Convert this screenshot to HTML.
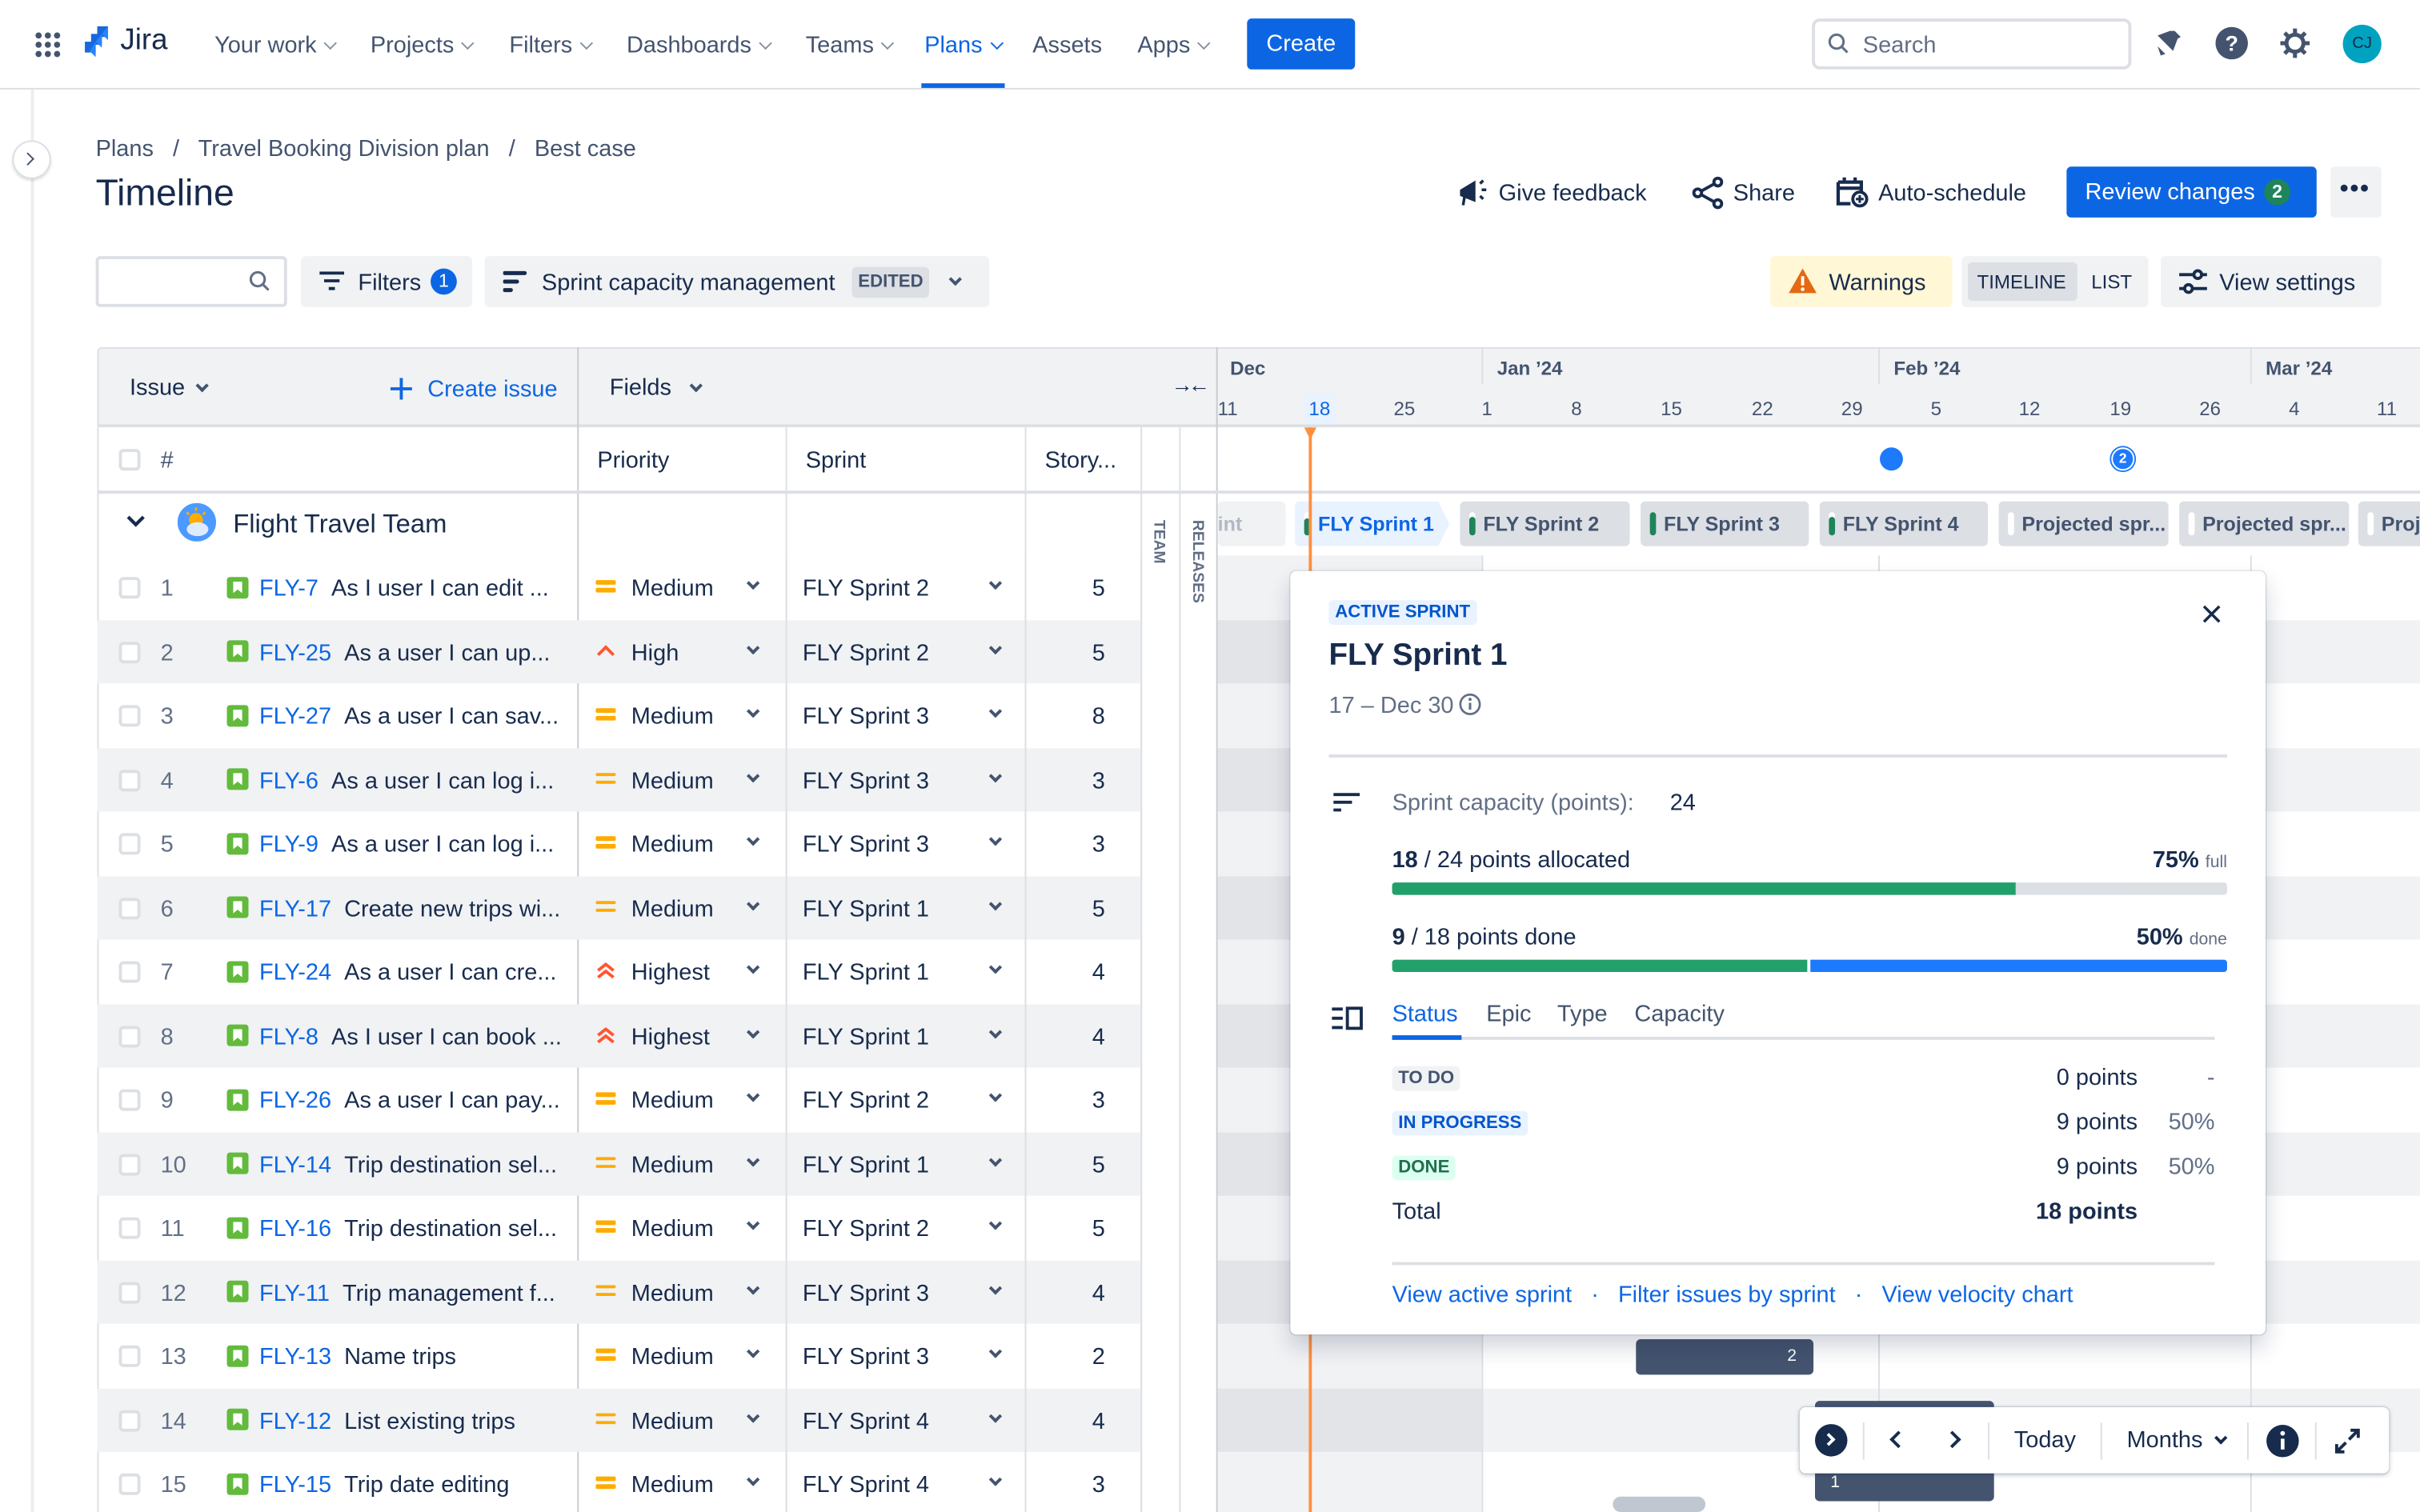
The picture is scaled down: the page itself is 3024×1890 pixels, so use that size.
<!DOCTYPE html>
<html><head><meta charset="utf-8"><style>
*{box-sizing:border-box;margin:0;padding:0}
html,body{width:3024px;height:1890px;overflow:hidden;background:#fff}
#w{position:absolute;left:0;top:0;width:1568px;height:980px;transform:scale(1.928572);transform-origin:0 0;font-family:"Liberation Sans",sans-serif;color:#172b4d;font-size:15px;overflow:hidden}
.a{position:absolute;white-space:nowrap}
.nav{top:21px;font-size:15px;color:#44546f}
.cv{display:inline-block;width:6px;height:6px;border-right:1.5px solid #8590a2;border-bottom:1.5px solid #8590a2;transform:rotate(45deg);margin-left:6px;position:relative;top:-3px}
.cd{display:inline-block;width:6px;height:6px;border-right:2px solid #44546f;border-bottom:2px solid #44546f;transform:rotate(45deg);position:relative;top:-3px}
.r{position:absolute;left:63px;width:676px;height:41.5px}
.r>*{position:absolute;top:13px}
.cb{left:14px!important;top:14px!important;width:14px;height:14px;border:2px solid #dcdfe4;border-radius:3px;background:#fff}
.n{left:41px;color:#626f86}
.ic{left:84px;top:13.5px!important;width:14px;height:14px;background:#63ba3c;border-radius:2px}
.ic:after{content:"";position:absolute;left:4px;top:3px;width:6px;height:8px;background:#fff;clip-path:polygon(0 0,100% 0,100% 100%,50% 70%,0 100%)}
.k{left:105px;color:#0c66e4}
.pi{left:323px;top:15px!important;width:13px;height:10px}
.pt{left:346px}
.c1{left:422px;top:15px!important}
.st{left:457px}
.c2{left:579px;top:15px!important}
.sp{right:23px}
.med:before,.med:after{content:"";position:absolute;left:0;width:13px;height:2.5px;background:#ffab00;border-radius:1px}
.med:before{top:1px}.med:after{top:6px}
.vl{position:absolute;width:1px;background:#dcdfe4}
.chip{position:absolute;top:325px;height:29px;background:#dcdfe4;border-radius:3px;font-weight:bold;font-size:13px;color:#44546f;padding:7px 0 0 15px}
.chip i{position:absolute;left:6px;top:7px;width:4px;height:15px;background:#fff;border-radius:2px}
.chip i b{position:absolute;left:0;bottom:0;width:4px;height:10px;background:#1f845a;border-radius:2px}
.btn{position:absolute;background:#f1f2f4;border-radius:3px;height:33px}
.loz{display:inline-block;font-size:11.5px;font-weight:bold;padding:2px 4px;border-radius:3px}
</style></head><body><div id="w">

<div class="a" style="left:0;top:57px;width:1568px;height:1px;background:#dcdfe4"></div>
<svg class="a" style="left:22px;top:20px" width="18" height="18"><g fill="#44546f"><circle cx="3" cy="3" r="2"/><circle cx="9" cy="3" r="2"/><circle cx="15" cy="3" r="2"/><circle cx="3" cy="9" r="2"/><circle cx="9" cy="9" r="2"/><circle cx="15" cy="9" r="2"/><circle cx="3" cy="15" r="2"/><circle cx="9" cy="15" r="2"/><circle cx="15" cy="15" r="2"/></g></svg>
<svg class="a" style="left:52px;top:17px" width="20" height="22" viewBox="0 0 20 22"><path d="M18 0h-7v7h7zM14 5H7v7h7zM10 10H3v7h7z" fill="#1868db"/><path d="M18 0v9l-4-4zM14 5v9l-4-4zM10 10v10l-4-4z" fill="#2684ff"/></svg>
<div class="a" style="left:78px;top:16px;font-size:19px;color:#172b4d">Jira</div>
<div class="a nav" style="left:139px">Your work<span class="cv"></span></div>
<div class="a nav" style="left:240px">Projects<span class="cv"></span></div>
<div class="a nav" style="left:330px">Filters<span class="cv"></span></div>
<div class="a nav" style="left:406px">Dashboards<span class="cv"></span></div>
<div class="a nav" style="left:522px">Teams<span class="cv"></span></div>
<div class="a nav" style="left:599px;color:#0c66e4">Plans<span class="cv" style="border-color:#0c66e4"></span></div>
<div class="a" style="left:597px;top:54px;width:54px;height:3px;background:#0c66e4"></div>
<div class="a nav" style="left:669px">Assets</div>
<div class="a nav" style="left:737px">Apps<span class="cv"></span></div>
<div class="a" style="left:808px;top:12px;width:70px;height:33px;background:#0c66e4;border-radius:3px;color:#fff;font-size:15px;text-align:center;line-height:33px">Create</div>
<div class="a" style="left:1174px;top:12px;width:207px;height:33px;border:2px solid #dcdfe4;border-radius:5px;color:#626f86;padding:7px 0 0 31px">Search</div>
<svg class="a" style="left:1184px;top:21px" width="14" height="14"><circle cx="6" cy="6" r="4.5" fill="none" stroke="#626f86" stroke-width="1.6"/><path d="M9.5 9.5l3.5 3.5" stroke="#626f86" stroke-width="1.6"/></svg>
<svg class="a" style="left:1395px;top:18px" width="20" height="20" viewBox="0 0 20 20"><path d="M14 2l4 4-2 1-3 8-10-10 8-3zM3 12l5 5-3 1z" fill="#44546f"/></svg>
<svg class="a" style="left:1435px;top:17px" width="22" height="22"><circle cx="11" cy="11" r="10.5" fill="#44546f"/><text x="11" y="16" text-anchor="middle" font-family="Liberation Sans" font-weight="bold" font-size="14" fill="#fff">?</text></svg>
<svg class="a" style="left:1476px;top:17px" width="22" height="22" viewBox="0 0 22 22"><g fill="none" stroke="#44546f" stroke-width="2.6"><circle cx="11" cy="11" r="5.5"/><path d="M11 1.5v3.5M11 17v3.5M1.5 11h3.5M17 11h3.5M4.3 4.3l2.4 2.4M15.3 15.3l2.4 2.4M4.3 17.7l2.4-2.4M15.3 6.7l2.4-2.4"/></g></svg>
<div class="a" style="left:1518px;top:16px;width:25px;height:25px;border-radius:50%;background:#00a3bf;color:#172b4d;font-size:10.5px;text-align:center;line-height:25px">CJ</div>

<div class="a" style="left:20px;top:58px;width:2px;height:922px;background:#eceef1"></div>
<div class="a" style="left:8px;top:91px;width:25px;height:25px;border-radius:50%;background:#fff;border:1px solid #dcdfe4;box-shadow:0 1px 2px rgba(0,0,0,.15)"></div>
<div class="a" style="left:15px;top:100px;width:6px;height:6px;border-right:1.8px solid #44546f;border-top:1.8px solid #44546f;transform:rotate(45deg)"></div>

<div class="a" style="left:62px;top:88px;color:#44546f">Plans &nbsp;&nbsp;/&nbsp;&nbsp; Travel Booking Division plan &nbsp;&nbsp;/&nbsp;&nbsp; Best case</div>
<div class="a" style="left:62px;top:112px;font-size:24px;color:#172b4d">Timeline</div>

<svg class="a" style="left:943px;top:114px" width="22" height="22" viewBox="0 0 22 22"><path d="M3 9l10-6v14L3 13z" fill="#172b4d"/><path d="M6 13l-1 6" stroke="#172b4d" stroke-width="1.8"/><path d="M16 5l2-2M17 9h3M16 13l2 2" stroke="#172b4d" stroke-width="1.8"/></svg>
<div class="a" style="left:971px;top:117px">Give feedback</div>
<svg class="a" style="left:1096px;top:114px" width="22" height="22"><g fill="none" stroke="#172b4d" stroke-width="2"><circle cx="17" cy="4" r="2.5"/><circle cx="4" cy="11" r="2.5"/><circle cx="17" cy="18" r="2.5"/><path d="M6 10l9-5M6 12l9 5"/></g></svg>
<div class="a" style="left:1123px;top:117px">Share</div>
<svg class="a" style="left:1189px;top:113px" width="22" height="22" viewBox="0 0 22 22"><path d="M2 5h15v6M2 5v14h8M2 9h15M6 2v4M13 2v4" fill="none" stroke="#172b4d" stroke-width="2.2"/><circle cx="16" cy="16" r="4.5" fill="none" stroke="#172b4d" stroke-width="2"/><path d="M16 13.5v5M13.5 16h5" stroke="#172b4d" stroke-width="1.6"/></svg>
<div class="a" style="left:1217px;top:117px">Auto-schedule</div>
<div class="a" style="left:1339px;top:108px;width:162px;height:33px;background:#0c66e4;border-radius:3px;color:#fff;padding:8px 0 0 12px">Review changes</div>
<div class="a" style="left:1467px;top:116px;width:17px;height:17px;border-radius:50%;background:#1f845a;color:#fff;font-size:12px;text-align:center;line-height:17px;font-weight:bold">2</div>
<div class="btn" style="left:1510px;top:108px;width:33px"></div>
<div class="a" style="left:1516px;top:114px;font-weight:bold;font-size:16px;letter-spacing:1px">•••</div>

<div class="a" style="left:62px;top:166px;width:124px;height:33px;border:2px solid #dcdfe4;border-radius:3px"></div>
<svg class="a" style="left:161px;top:175px" width="14" height="14"><circle cx="6" cy="6" r="4.5" fill="none" stroke="#626f86" stroke-width="1.6"/><path d="M9.5 9.5l3.5 3.5" stroke="#626f86" stroke-width="1.6"/></svg>
<div class="btn" style="left:195px;top:166px;width:111px"></div>
<svg class="a" style="left:207px;top:176px" width="16" height="14"><path d="M0 1h16M3 6h10M6 11h4" stroke="#172b4d" stroke-width="2"/></svg>
<div class="a" style="left:232px;top:175px">Filters</div>
<div class="a" style="left:279px;top:174px;width:17px;height:17px;border-radius:50%;background:#0c66e4;color:#fff;font-size:12px;text-align:center;line-height:17px">1</div>
<div class="btn" style="left:314px;top:166px;width:327px"></div>
<svg class="a" style="left:326px;top:175px" width="16" height="16"><path d="M1 2h13M1 7.5h8M1 13h4" stroke="#172b4d" stroke-width="2.6" stroke-linecap="round"/></svg>
<div class="a" style="left:351px;top:175px">Sprint capacity management</div>
<div class="a" style="left:552px;top:173px;height:20px;background:#dcdfe4;border-radius:3px;font-size:11.5px;font-weight:bold;color:#44546f;padding:4px 4px">EDITED</div>
<div class="a" style="left:616px;top:174px"><span class="cd"></span></div>

<div class="a" style="left:1147px;top:166px;width:118px;height:33px;background:#fff7d6;border-radius:3px"></div>
<svg class="a" style="left:1158px;top:173px" width="20" height="18"><path d="M10 1L19 17H1z" fill="#e56910"/><path d="M10 6v6" stroke="#fff" stroke-width="2"/><circle cx="10" cy="14.5" r="1.2" fill="#fff"/></svg>
<div class="a" style="left:1185px;top:175px">Warnings</div>
<div class="btn" style="left:1271px;top:166px;width:121px"></div>
<div class="a" style="left:1275px;top:170px;width:71px;height:25px;background:#dcdfe4;border-radius:3px"></div>
<div class="a" style="left:1281px;top:176px;font-size:12.5px">TIMELINE</div>
<div class="a" style="left:1355px;top:176px;font-size:12.5px">LIST</div>
<div class="btn" style="left:1400px;top:166px;width:143px"></div>
<svg class="a" style="left:1411px;top:174px" width="20" height="18"><g stroke="#172b4d" stroke-width="2" fill="none"><path d="M1 4h18M1 13h18"/><circle cx="13" cy="4" r="2.5" fill="#f1f2f4"/><circle cx="7" cy="13" r="2.5" fill="#f1f2f4"/></g></svg>
<div class="a" style="left:1438px;top:175px">View settings</div>

<div class="a" style="left:63px;top:225px;width:1505px;height:52px;background:#f1f2f4;border-top:1px solid #dcdfe4;border-bottom:2px solid #dcdfe4;border-left:1px solid #dcdfe4;border-radius:3px 0 0 0"></div>
<div class="a" style="left:84px;top:243px">Issue &nbsp;<span class="cd"></span></div>
<svg class="a" style="left:253px;top:245px" width="14" height="14"><path d="M7 0v14M0 7h14" stroke="#0c66e4" stroke-width="2"/></svg>
<div class="a" style="left:277px;top:244px;color:#0c66e4">Create issue</div>
<div class="vl" style="left:374px;top:225px;height:755px;background:#c8cbd2"></div>
<div class="a" style="left:395px;top:243px">Fields &nbsp;&nbsp;<span class="cd"></span></div>
<div class="a" style="left:759px;top:241px;font-size:14px;font-weight:bold;letter-spacing:-3px">→←</div>
<div class="vl" style="left:788px;top:225px;height:755px;background:#c8cbd2"></div>

<div class="vl" style="left:960px;top:225px;height:24px"></div>
<div class="vl" style="left:1217px;top:225px;height:24px"></div>
<div class="vl" style="left:1458px;top:225px;height:24px"></div>
<div class="a" style="left:797px;top:232px;font-size:12.5px;font-weight:bold;color:#44546f">Dec</div>
<div class="a" style="left:970px;top:232px;font-size:12.5px;font-weight:bold;color:#44546f">Jan ’24</div>
<div class="a" style="left:1227px;top:232px;font-size:12.5px;font-weight:bold;color:#44546f">Feb ’24</div>
<div class="a" style="left:1468px;top:232px;font-size:12.5px;font-weight:bold;color:#44546f">Mar ’24</div>
<div class="a" style="left:845px;top:255px;width:20px;height:20px;background:#e9f2ff"></div>
<div style="position:absolute;top:258px;left:0;font-size:12.5px;color:#44546f">
<span class="a" style="left:789px">11</span><span class="a" style="left:848px;color:#0c66e4">18</span><span class="a" style="left:903px">25</span><span class="a" style="left:960px">1</span><span class="a" style="left:1018px">8</span><span class="a" style="left:1076px">15</span><span class="a" style="left:1135px">22</span><span class="a" style="left:1193px">29</span><span class="a" style="left:1251px">5</span><span class="a" style="left:1308px">12</span><span class="a" style="left:1367px">19</span><span class="a" style="left:1425px">26</span><span class="a" style="left:1483px">4</span><span class="a" style="left:1540px">11</span></div>

<div class="a" style="left:63px;top:318px;width:1505px;height:2px;background:#dcdfe4"></div>
<div class="a" style="left:63px;top:277px;width:1px;height:703px;background:#dcdfe4"></div>
<div class="a" style="left:77px;top:291px;width:14px;height:14px;border:2px solid #dcdfe4;border-radius:3px"></div>
<div class="a" style="left:104px;top:290px;color:#44546f">#</div>
<div class="a" style="left:387px;top:290px">Priority</div>
<div class="a" style="left:522px;top:290px">Sprint</div>
<div class="a" style="left:677px;top:290px">Story...</div>
<div class="vl" style="left:509px;top:277px;height:703px"></div>
<div class="vl" style="left:664px;top:277px;height:703px"></div>
<div class="vl" style="left:739px;top:277px;height:703px"></div>
<div class="vl" style="left:764px;top:277px;height:703px"></div>
<div class="a" style="left:1218px;top:290px;width:15px;height:15px;border-radius:50%;background:#1d7afc"></div>
<div class="a" style="left:1368px;top:290px;width:15px;height:15px;border-radius:50%;background:#1d7afc;border:1.5px solid #fff;box-shadow:0 0 0 1px #1d7afc;color:#fff;font-size:9px;font-weight:bold;text-align:center;line-height:12px">2</div>

<svg class="a" style="left:82px;top:333px" width="12" height="10"><path d="M1 2l5 5 5-5" fill="none" stroke="#172b4d" stroke-width="2.2"/></svg>
<svg class="a" style="left:115px;top:326px" width="25" height="25"><circle cx="12.5" cy="12.5" r="12.5" fill="#4c9aff"/><circle cx="12" cy="11" r="4.5" fill="#ffab00"/><path d="M12 3v2M6 6l1.5 1.5M18 6l-1.5 1.5" stroke="#ffab00" stroke-width="1.5"/><ellipse cx="13" cy="17" rx="7" ry="4.5" fill="#deebff"/></svg>
<div class="a" style="left:151px;top:330px;font-size:17px">Flight Travel Team</div>
<div class="a" style="top:337px;font-size:10px;font-weight:bold;color:#626f86;transform:rotate(90deg);transform-origin:0 0;left:756px">TEAM</div>
<div class="a" style="left:781px;top:337px;font-size:10px;font-weight:bold;color:#626f86;transform:rotate(90deg);transform-origin:0 0">RELEASES</div>

<div class="a" style="left:789px;top:360px;width:171px;height:620px;background:#f1f2f4"></div>
<div class="a" style="left:63px;top:401.5px;width:676px;height:41.5px;background:#f1f2f4"></div>
<div class="a" style="left:63px;top:484.5px;width:676px;height:41.5px;background:#f1f2f4"></div>
<div class="a" style="left:63px;top:567.5px;width:676px;height:41.5px;background:#f1f2f4"></div>
<div class="a" style="left:63px;top:650.5px;width:676px;height:41.5px;background:#f1f2f4"></div>
<div class="a" style="left:63px;top:733.5px;width:676px;height:41.5px;background:#f1f2f4"></div>
<div class="a" style="left:63px;top:816.5px;width:676px;height:41.5px;background:#f1f2f4"></div>
<div class="a" style="left:63px;top:899.5px;width:676px;height:41.5px;background:#f1f2f4"></div>
<div class="a" style="left:789px;top:401.5px;width:779px;height:41.5px;background:#f1f2f4"></div>
<div class="a" style="left:789px;top:484.5px;width:779px;height:41.5px;background:#f1f2f4"></div>
<div class="a" style="left:789px;top:567.5px;width:779px;height:41.5px;background:#f1f2f4"></div>
<div class="a" style="left:789px;top:650.5px;width:779px;height:41.5px;background:#f1f2f4"></div>
<div class="a" style="left:789px;top:733.5px;width:779px;height:41.5px;background:#f1f2f4"></div>
<div class="a" style="left:789px;top:816.5px;width:779px;height:41.5px;background:#f1f2f4"></div>
<div class="a" style="left:789px;top:899.5px;width:779px;height:41.5px;background:#f1f2f4"></div>
<div class="a" style="left:789px;top:401.5px;width:171px;height:41.5px;background:#e3e4e8"></div>
<div class="a" style="left:789px;top:484.5px;width:171px;height:41.5px;background:#e3e4e8"></div>
<div class="a" style="left:789px;top:567.5px;width:171px;height:41.5px;background:#e3e4e8"></div>
<div class="a" style="left:789px;top:650.5px;width:171px;height:41.5px;background:#e3e4e8"></div>
<div class="a" style="left:789px;top:733.5px;width:171px;height:41.5px;background:#e3e4e8"></div>
<div class="a" style="left:789px;top:816.5px;width:171px;height:41.5px;background:#e3e4e8"></div>
<div class="a" style="left:789px;top:899.5px;width:171px;height:41.5px;background:#e3e4e8"></div>
<div class="a" style="left:789px;top:320px;width:779px;height:40px;background:#fff"></div>
<div class="vl" style="left:960px;top:360px;height:620px"></div>
<div class="vl" style="left:1217px;top:360px;height:620px"></div>
<div class="vl" style="left:1458px;top:360px;height:620px"></div>
<div class="vl" style="left:509px;top:360px;height:620px"></div>
<div class="vl" style="left:664px;top:360px;height:620px"></div>
<div class="vl" style="left:739px;top:360px;height:620px"></div>
<div class="vl" style="left:764px;top:360px;height:620px"></div>

<div class="chip" style="left:789px;width:44px;background:#f1f2f4;color:#b3b9c4;padding-left:0">int</div>
<div class="chip" style="left:839px;width:100px;background:#e9f2ff;color:#0c66e4;clip-path:polygon(0 0,93% 0,100% 50%,93% 100%,0 100%)"><i><b style="height:11px"></b></i>FLY Sprint 1</div>
<div class="chip" style="left:946px;width:110px"><i><b style="height:12px"></b></i>FLY Sprint 2</div>
<div class="chip" style="left:1063px;width:109px"><i><b style="height:15px"></b></i>FLY Sprint 3</div>
<div class="chip" style="left:1179px;width:109px"><i><b style="height:12px"></b></i>FLY Sprint 4</div>
<div class="chip" style="left:1295px;width:110px"><i></i>Projected spr...</div>
<div class="chip" style="left:1412px;width:110px"><i></i>Projected spr...</div>
<div class="chip" style="left:1528px;width:60px"><i></i>Proj</div>

<div class="a" style="left:1060px;top:868px;width:115px;height:23px;background:#44546f;border-radius:3px;color:#fff;font-size:11px;padding:5px 0 0 98px">2</div>
<div class="a" style="left:1176px;top:908px;width:116px;height:23px;background:#44546f;border-radius:3px"></div>
<div class="a" style="left:1176px;top:950px;width:116px;height:23px;background:#44546f;border-radius:3px;color:#fff;font-size:11px;padding:5px 0 0 10px">1</div>

<div class="a" style="left:848px;top:277px;width:2px;height:703px;background:#ff8f3f"></div>
<div class="a" style="left:845px;top:277px;width:8px;height:8px;background:#ff8f3f;clip-path:polygon(0 0,100% 0,50% 100%)"></div>

<div class="r" style="top:360px"><span class="cb"></span><span class="n">1</span><span class="ic"></span><span class="k">FLY-7 <span style="color:#172b4d">&nbsp;As I user I can edit ...</span></span><span class="pi med"></span><span class="pt">Medium</span><span class="c1 cd"></span><span class="st">FLY Sprint 2</span><span class="c2 cd"></span><span class="sp">5</span></div>
<div class="r" style="top:401.5px"><span class="cb"></span><span class="n">2</span><span class="ic"></span><span class="k">FLY-25 <span style="color:#172b4d">&nbsp;As a user I can up...</span></span><svg class="pi" viewBox="0 0 13 10"><path d="M1.5 7.5l5-5 5 5" fill="none" stroke="#ff5630" stroke-width="2"/></svg><span class="pt">High</span><span class="c1 cd"></span><span class="st">FLY Sprint 2</span><span class="c2 cd"></span><span class="sp">5</span></div>
<div class="r" style="top:443px"><span class="cb"></span><span class="n">3</span><span class="ic"></span><span class="k">FLY-27 <span style="color:#172b4d">&nbsp;As a user I can sav...</span></span><span class="pi med"></span><span class="pt">Medium</span><span class="c1 cd"></span><span class="st">FLY Sprint 3</span><span class="c2 cd"></span><span class="sp">8</span></div>
<div class="r" style="top:484.5px"><span class="cb"></span><span class="n">4</span><span class="ic"></span><span class="k">FLY-6 <span style="color:#172b4d">&nbsp;As a user I can log i...</span></span><span class="pi med"></span><span class="pt">Medium</span><span class="c1 cd"></span><span class="st">FLY Sprint 3</span><span class="c2 cd"></span><span class="sp">3</span></div>
<div class="r" style="top:526px"><span class="cb"></span><span class="n">5</span><span class="ic"></span><span class="k">FLY-9 <span style="color:#172b4d">&nbsp;As a user I can log i...</span></span><span class="pi med"></span><span class="pt">Medium</span><span class="c1 cd"></span><span class="st">FLY Sprint 3</span><span class="c2 cd"></span><span class="sp">3</span></div>
<div class="r" style="top:567.5px"><span class="cb"></span><span class="n">6</span><span class="ic"></span><span class="k">FLY-17 <span style="color:#172b4d">&nbsp;Create new trips wi...</span></span><span class="pi med"></span><span class="pt">Medium</span><span class="c1 cd"></span><span class="st">FLY Sprint 1</span><span class="c2 cd"></span><span class="sp">5</span></div>
<div class="r" style="top:609px"><span class="cb"></span><span class="n">7</span><span class="ic"></span><span class="k">FLY-24 <span style="color:#172b4d">&nbsp;As a user I can cre...</span></span><svg class="pi" viewBox="0 0 13 10"><path d="M1.5 5l5-4 5 4M1.5 9.5l5-4 5 4" fill="none" stroke="#ff5630" stroke-width="2"/></svg><span class="pt">Highest</span><span class="c1 cd"></span><span class="st">FLY Sprint 1</span><span class="c2 cd"></span><span class="sp">4</span></div>
<div class="r" style="top:650.5px"><span class="cb"></span><span class="n">8</span><span class="ic"></span><span class="k">FLY-8 <span style="color:#172b4d">&nbsp;As I user I can book ...</span></span><svg class="pi" viewBox="0 0 13 10"><path d="M1.5 5l5-4 5 4M1.5 9.5l5-4 5 4" fill="none" stroke="#ff5630" stroke-width="2"/></svg><span class="pt">Highest</span><span class="c1 cd"></span><span class="st">FLY Sprint 1</span><span class="c2 cd"></span><span class="sp">4</span></div>
<div class="r" style="top:692px"><span class="cb"></span><span class="n">9</span><span class="ic"></span><span class="k">FLY-26 <span style="color:#172b4d">&nbsp;As a user I can pay...</span></span><span class="pi med"></span><span class="pt">Medium</span><span class="c1 cd"></span><span class="st">FLY Sprint 2</span><span class="c2 cd"></span><span class="sp">3</span></div>
<div class="r" style="top:733.5px"><span class="cb"></span><span class="n">10</span><span class="ic"></span><span class="k">FLY-14 <span style="color:#172b4d">&nbsp;Trip destination sel...</span></span><span class="pi med"></span><span class="pt">Medium</span><span class="c1 cd"></span><span class="st">FLY Sprint 1</span><span class="c2 cd"></span><span class="sp">5</span></div>
<div class="r" style="top:775px"><span class="cb"></span><span class="n">11</span><span class="ic"></span><span class="k">FLY-16 <span style="color:#172b4d">&nbsp;Trip destination sel...</span></span><span class="pi med"></span><span class="pt">Medium</span><span class="c1 cd"></span><span class="st">FLY Sprint 2</span><span class="c2 cd"></span><span class="sp">5</span></div>
<div class="r" style="top:816.5px"><span class="cb"></span><span class="n">12</span><span class="ic"></span><span class="k">FLY-11 <span style="color:#172b4d">&nbsp;Trip management f...</span></span><span class="pi med"></span><span class="pt">Medium</span><span class="c1 cd"></span><span class="st">FLY Sprint 3</span><span class="c2 cd"></span><span class="sp">4</span></div>
<div class="r" style="top:858px"><span class="cb"></span><span class="n">13</span><span class="ic"></span><span class="k">FLY-13 <span style="color:#172b4d">&nbsp;Name trips</span></span><span class="pi med"></span><span class="pt">Medium</span><span class="c1 cd"></span><span class="st">FLY Sprint 3</span><span class="c2 cd"></span><span class="sp">2</span></div>
<div class="r" style="top:899.5px"><span class="cb"></span><span class="n">14</span><span class="ic"></span><span class="k">FLY-12 <span style="color:#172b4d">&nbsp;List existing trips</span></span><span class="pi med"></span><span class="pt">Medium</span><span class="c1 cd"></span><span class="st">FLY Sprint 4</span><span class="c2 cd"></span><span class="sp">4</span></div>
<div class="r" style="top:941px"><span class="cb"></span><span class="n">15</span><span class="ic"></span><span class="k">FLY-15 <span style="color:#172b4d">&nbsp;Trip date editing</span></span><span class="pi med"></span><span class="pt">Medium</span><span class="c1 cd"></span><span class="st">FLY Sprint 4</span><span class="c2 cd"></span><span class="sp">3</span></div>

<div class="a" style="left:836px;top:370px;width:632px;height:495px;background:#fff;border-radius:4px;box-shadow:0 8px 14px rgba(9,30,66,.18),0 0 1px rgba(9,30,66,.35)">
 <div class="a" style="left:25px;top:19px;background:#e9f2ff;color:#0055cc;font-size:11.5px;font-weight:bold;padding:2px 4px;border-radius:3px">ACTIVE SPRINT</div>
 <svg class="a" style="left:591px;top:22px" width="12" height="12"><path d="M1 1l10 10M11 1L1 11" stroke="#172b4d" stroke-width="1.8"/></svg>
 <div class="a" style="left:25px;top:44px;font-size:20px;font-weight:bold">FLY Sprint 1</div>
 <div class="a" style="left:25px;top:79px;color:#626f86">17 – Dec 30</div>
 <svg class="a" style="left:109px;top:79px" width="15" height="15"><circle cx="7.5" cy="7.5" r="6.3" fill="none" stroke="#626f86" stroke-width="1.4"/><path d="M7.5 6.5v4.5" stroke="#626f86" stroke-width="1.6"/><circle cx="7.5" cy="4.3" r="1" fill="#626f86"/></svg>
 <div class="a" style="left:25px;top:119px;width:582px;height:2px;background:#dcdfe4"></div>
 <svg class="a" style="left:27px;top:143px" width="20" height="14"><path d="M1 2h17M1 7h12M1 12h5" stroke="#172b4d" stroke-width="2"/></svg>
 <div class="a" style="left:66px;top:142px;color:#626f86">Sprint capacity (points):</div>
 <div class="a" style="left:246px;top:142px">24</div>
 <div class="a" style="left:66px;top:179px"><b>18</b> / 24 points allocated</div>
 <div class="a" style="right:25px;top:179px"><b>75%</b> <span style="font-size:11px;color:#626f86">full</span></div>
 <div class="a" style="left:66px;top:202px;width:541px;height:8px;background:#dcdfe4;border-radius:2px"></div>
 <div class="a" style="left:66px;top:202px;width:404px;height:8px;background:#22a06b;border-radius:2px 0 0 2px"></div>
 <div class="a" style="left:66px;top:229px"><b>9</b> / 18 points done</div>
 <div class="a" style="right:25px;top:229px"><b>50%</b> <span style="font-size:11px;color:#626f86">done</span></div>
 <div class="a" style="left:66px;top:252px;width:269px;height:8px;background:#22a06b;border-radius:2px 0 0 2px"></div>
 <div class="a" style="left:337px;top:252px;width:270px;height:8px;background:#1d7afc;border-radius:0 2px 2px 0"></div>
 <svg class="a" style="left:26px;top:282px" width="22" height="16"><path d="M1 2h7M1 8h7M1 14h7" stroke="#172b4d" stroke-width="2"/><rect x="11" y="1.5" width="9" height="13" fill="none" stroke="#172b4d" stroke-width="2"/></svg>
 <div class="a" style="left:66px;top:279px;color:#0c66e4">Status</div>
 <div class="a" style="left:127px;top:279px;color:#44546f">Epic</div>
 <div class="a" style="left:173px;top:279px;color:#44546f">Type</div>
 <div class="a" style="left:223px;top:279px;color:#44546f">Capacity</div>
 <div class="a" style="left:66px;top:302px;width:533px;height:2px;background:#dcdfe4"></div>
 <div class="a" style="left:66px;top:301px;width:45px;height:3px;background:#0c66e4"></div>
 <div class="a" style="left:66px;top:319px"><span class="loz" style="background:#f1f2f4;color:#44546f">TO DO</span></div>
 <div class="a" style="left:66px;top:348px"><span class="loz" style="background:#e9f2ff;color:#0055cc">IN PROGRESS</span></div>
 <div class="a" style="left:66px;top:377px"><span class="loz" style="background:#dcfff1;color:#216e4e">DONE</span></div>
 <div class="a" style="right:83px;top:320px">0 points</div><div class="a" style="right:33px;top:320px;color:#626f86">-</div>
 <div class="a" style="right:83px;top:349px">9 points</div><div class="a" style="right:33px;top:349px;color:#626f86">50%</div>
 <div class="a" style="right:83px;top:378px">9 points</div><div class="a" style="right:33px;top:378px;color:#626f86">50%</div>
 <div class="a" style="left:66px;top:407px">Total</div>
 <div class="a" style="right:83px;top:407px;font-weight:bold">18 points</div>
 <div class="a" style="left:66px;top:448px;width:533px;height:2px;background:#dcdfe4"></div>
 <div class="a" style="left:66px;top:461px;color:#0c66e4">View active sprint &nbsp;&nbsp;·&nbsp;&nbsp; Filter issues by sprint &nbsp;&nbsp;·&nbsp;&nbsp; View velocity chart</div>
</div>

<div class="a" style="left:1166px;top:912px;width:382px;height:43px;background:#fff;border-radius:4px;box-shadow:0 1px 3px rgba(9,30,66,.25),0 0 1px rgba(9,30,66,.3)">
 <div class="a" style="left:10px;top:11px;width:21px;height:21px;border-radius:50%;background:#172b4d"></div>
 <div class="a" style="left:16px;top:18px;width:6px;height:6px;border-right:2px solid #fff;border-top:2px solid #fff;transform:rotate(45deg)"></div>
 <div class="vl" style="left:41px;top:10px;height:24px"></div>
 <div class="a" style="left:60px;top:17px;width:8px;height:8px;border-left:2px solid #172b4d;border-bottom:2px solid #172b4d;transform:rotate(45deg)"></div>
 <div class="a" style="left:95px;top:17px;width:8px;height:8px;border-right:2px solid #172b4d;border-top:2px solid #172b4d;transform:rotate(45deg)"></div>
 <div class="vl" style="left:122px;top:10px;height:24px"></div>
 <div class="a" style="left:139px;top:13px">Today</div>
 <div class="vl" style="left:195px;top:10px;height:24px"></div>
 <div class="a" style="left:212px;top:13px">Months &nbsp;<span class="cd" style="border-color:#172b4d"></span></div>
 <div class="vl" style="left:290px;top:10px;height:24px"></div>
 <svg class="a" style="left:302px;top:11px" width="22" height="22"><circle cx="11" cy="11" r="10.5" fill="#172b4d"/><path d="M11 9.5v7" stroke="#fff" stroke-width="2.4"/><circle cx="11" cy="6" r="1.5" fill="#fff"/></svg>
 <div class="vl" style="left:334px;top:10px;height:24px"></div>
 <svg class="a" style="left:345px;top:12px" width="20" height="20"><path d="M11 9l6-6M12 3h5v5M9 11l-6 6M3 12v5h5" fill="none" stroke="#172b4d" stroke-width="2"/></svg>
</div>
<div class="a" style="left:1045px;top:970px;width:60px;height:10px;border-radius:5px;background:#c1c7d0"></div>

</div></body></html>
